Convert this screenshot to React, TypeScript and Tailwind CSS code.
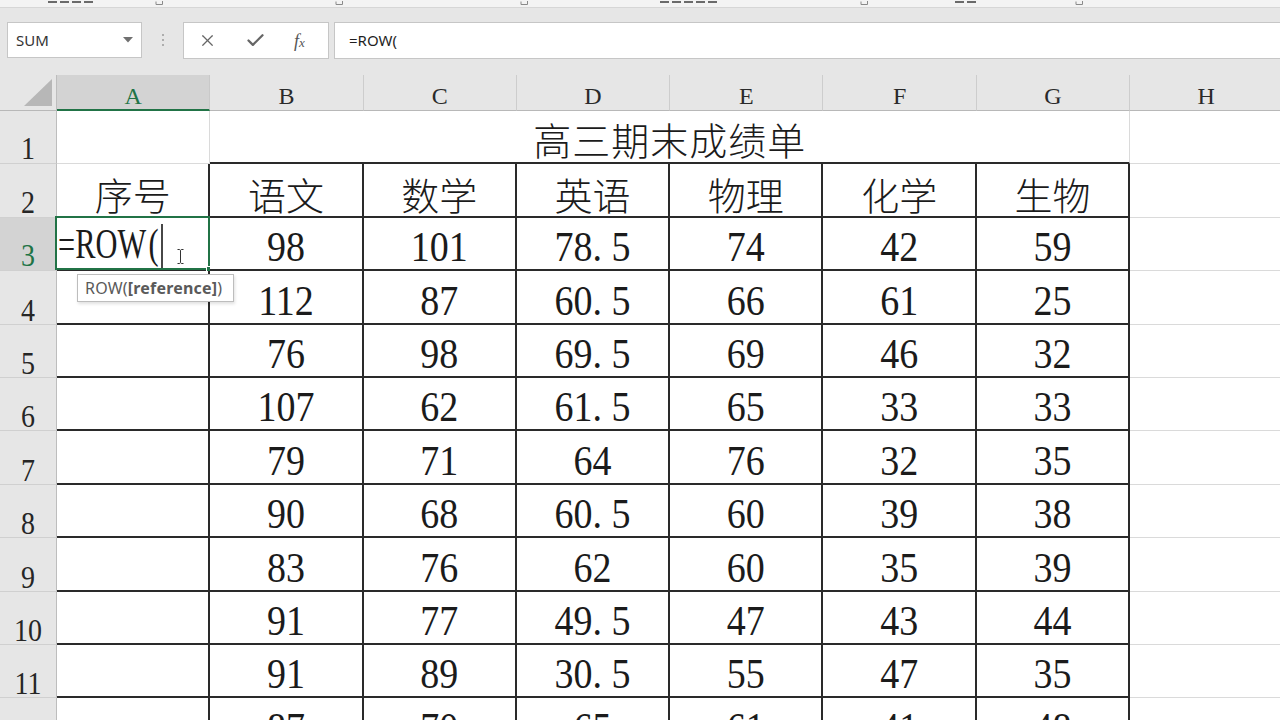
import { X, Check } from "lucide-react"

const COLS = ["A", "B", "C", "D", "E", "F", "G", "H"]

const SUBJECTS = ["语文", "数学", "英语", "物理", "化学", "生物"]

const SCORES: string[][] = [
  ["98", "101", "78.5", "74", "42", "59"],
  ["112", "87", "60.5", "66", "61", "25"],
  ["76", "98", "69.5", "69", "46", "32"],
  ["107", "62", "61.5", "65", "33", "33"],
  ["79", "71", "64", "76", "32", "35"],
  ["90", "68", "60.5", "60", "39", "38"],
  ["83", "76", "62", "60", "35", "39"],
  ["91", "77", "49.5", "47", "43", "44"],
  ["91", "89", "30.5", "55", "47", "35"],
  ["87", "70", "65", "61", "41", "48"],
]

const RIGHT = {
  dark: "border-r-2 border-r-[#2a2a2a]",
  light: "border-r border-r-[#dadada]",
}
const BOTTOM = {
  dark: "border-b-2 border-b-[#2a2a2a]",
  light: "border-b border-b-[#dadada]",
}

type Edge = "dark" | "light"

function Cell({
  right,
  bottom,
  className = "",
  children,
}: {
  right: Edge
  bottom: Edge
  className?: string
  children?: React.ReactNode
}) {
  return (
    <div className={`relative flex min-w-0 bg-white ${RIGHT[right]} ${BOTTOM[bottom]} ${className}`}>
      {children}
    </div>
  )
}

function Num({ v }: { v: string }) {
  const [a, b] = v.split(".")
  return (
    <span className="inline-block origin-bottom scale-y-[1.12] font-['Liberation_Serif',serif] text-[38px] leading-none text-[#1b1b1b]">
      {a}
      {b !== undefined && (
        <>
          <span className="inline-block w-[0.5em] text-left">.</span>
          {b}
        </>
      )}
    </span>
  )
}

function Zh({ children, className = "" }: { children: React.ReactNode; className?: string }) {
  return (
    <span className={`font-['Noto_Sans_CJK_SC',sans-serif] text-[38px] font-light leading-none text-[#1b1b1b] ${className}`}>
      {children}
    </span>
  )
}

function RowHead({ n, active = false }: { n: number; active?: boolean }) {
  return (
    <div
      className={`flex items-end justify-center border-r border-b border-r-[#bdbdbd] border-b-[#d0d0d0] ${
        active ? "bg-[#d3d3d3] text-[#217346]" : "bg-[#e6e6e6] text-[#262626]"
      }`}
    >
      <span className="-mb-[2px] inline-block origin-bottom scale-y-[1.1] font-['Liberation_Serif',serif] text-[28px] leading-none">
        {n}
      </span>
    </div>
  )
}

function Launcher() {
  return (
    <svg width="9" height="6" viewBox="0 0 9 6" className="block">
      <path d="M1 0.5v3h6.5V0" fill="none" stroke="#8a8a8a" strokeWidth="1" />
    </svg>
  )
}

// bottoms of the ribbon group labels, cut by the window edge
function LabelTail({ w }: { w: number }) {
  return (
    <div className="mb-[4px] flex gap-[3px]">
      {Array.from({ length: Math.round(w / 12) }).map((_, i) => (
        <span key={i} className="h-[2px] w-[9px] bg-[#6a6a6a]" />
      ))}
    </div>
  )
}

function RibbonStrip() {
  return (
    <div className="flex h-[8px] items-end overflow-hidden border-b border-b-[#d6d6d6] bg-[#f3f3f3]">
      <div className="w-[48px] shrink-0" />
      <div className="flex w-[107px] shrink-0 items-end">
        <LabelTail w={46} />
      </div>
      <div className="flex w-[180px] shrink-0 items-end">
        <Launcher />
      </div>
      <div className="flex w-[185px] shrink-0 items-end">
        <Launcher />
      </div>
      <div className="flex w-[140px] shrink-0 items-end">
        <Launcher />
      </div>
      <div className="flex w-[200px] shrink-0 items-end">
        <LabelTail w={60} />
      </div>
      <div className="flex w-[95px] shrink-0 items-end">
        <Launcher />
      </div>
      <div className="flex w-[120px] shrink-0 items-end">
        <LabelTail w={26} />
      </div>
      <div className="flex w-[100px] shrink-0 items-end">
        <Launcher />
      </div>
    </div>
  )
}

function FormulaBar() {
  return (
    <div className="flex h-[67px] items-start bg-[#e6e6e6] pt-[14px] font-['Noto_Sans',sans-serif]">
      <div className="ml-[7px] flex h-[36px] w-[135px] shrink-0 items-center justify-between border border-[#c6c6c6] bg-white pl-[8px] pr-[8px]">
        <span className="text-[15px] text-[#333]">SUM</span>
        <svg width="10" height="6" viewBox="0 0 10 6">
          <path d="M0 0h10L5 5.5z" fill="#707070" />
        </svg>
      </div>
      <div className="flex h-[36px] w-[41px] shrink-0 flex-col items-center justify-center gap-[3px]">
        <span className="h-[2px] w-[2px] rounded-full bg-[#9a9a9a]" />
        <span className="h-[2px] w-[2px] rounded-full bg-[#9a9a9a]" />
        <span className="h-[2px] w-[2px] rounded-full bg-[#9a9a9a]" />
      </div>
      <div className="flex h-[37px] w-[146px] shrink-0 items-center border border-[#c6c6c6] bg-white pl-[14px] pr-[12px]">
        <X size={19} strokeWidth={1.5} color="#666" />
        <Check size={21} strokeWidth={2.6} color="#666" className="ml-[28px]" />
        <span className="ml-[28px] font-['Liberation_Serif',serif] text-[18px] italic leading-none text-[#555]">
          f<span className="text-[13px]">x</span>
        </span>
      </div>
      <div className="-mr-[4px] ml-[5px] flex h-[37px] flex-1 items-center border border-[#c6c6c6] bg-white pl-[14px]">
        <span className="text-[15px] text-[#1f1f1f]">=ROW(</span>
      </div>
    </div>
  )
}

function IBeam() {
  return (
    <svg width="7" height="15" viewBox="0 0 7 15">
      <path d="M0.5 0.5h2.2l0.8 0.8 0.8-0.8h2.2M3.5 1.3v12.4M0.5 14.5h2.2l0.8-0.8 0.8 0.8h2.2" fill="none" stroke="#333" strokeWidth="1" />
    </svg>
  )
}

export default function App() {
  return (
    <div className="h-[720px] w-[1280px] overflow-hidden bg-white">
      <RibbonStrip />
      <FormulaBar />

      <div className="grid grid-cols-[57px_repeat(8,153.3px)] grid-rows-[36px_repeat(12,53.4px)]">
        {/* corner */}
        <div className="flex items-end justify-end border-r border-b border-r-[#bdbdbd] border-b-[#b8b8b8] bg-[#e6e6e6] pb-[4px] pr-[4px]">
          <svg width="28" height="27" viewBox="0 0 28 27">
            <path d="M28 0V27H0z" fill="#b7b7b7" />
          </svg>
        </div>
        {COLS.map((c) =>
          c === "A" ? (
            <div
              key={c}
              className="flex items-end justify-center border-r border-b-2 border-r-[#c9c9c9] border-b-[#217346] bg-[#d3d3d3] pb-[1px]"
            >
              <span className="font-['Liberation_Serif',serif] text-[24px] leading-none text-[#217346]">{c}</span>
            </div>
          ) : (
            <div
              key={c}
              className="flex items-end justify-center border-r border-b border-r-[#cdcdcd] border-b-[#b8b8b8] bg-[#e6e6e6] pb-[2px]"
            >
              <span className="font-['Liberation_Serif',serif] text-[24px] leading-none text-[#2a2a2a]">{c}</span>
            </div>
          )
        )}

        {/* row 1: title */}
        <RowHead n={1} />
        <Cell right="light" bottom="light" />
        <Cell right="light" bottom="dark" className="col-span-6 items-end justify-center pb-[4px]">
          <Zh className="tracking-[1px]">高三期末成绩单</Zh>
        </Cell>
        <Cell right="light" bottom="light" />

        {/* row 2: headers */}
        <RowHead n={2} />
        <Cell right="dark" bottom="dark" className="items-end justify-center pb-[3px]">
          <Zh>序号</Zh>
        </Cell>
        {SUBJECTS.map((s) => (
          <Cell key={s} right="dark" bottom="dark" className="items-end justify-center pb-[3px]">
            <Zh>{s}</Zh>
          </Cell>
        ))}
        <Cell right="light" bottom="light" />

        {/* data rows */}
        {SCORES.map((row, i) => {
          const n = i + 3
          return [
            <RowHead key={`h${n}`} n={n} active={n === 3} />,
            n === 3 ? (
              <Cell key={`a${n}`} right="dark" bottom="dark" className="items-end justify-start pb-[1px] pl-[1px]">
                <span className="inline-block origin-bottom-left scale-x-[0.8] scale-y-[1.1] whitespace-nowrap font-['Liberation_Serif',serif] text-[38px] leading-none text-[#1b1b1b]">
                  =ROW
                  <span className="ml-[3px]">(</span>
                  <span className="ml-[3px] inline-block h-[40px] w-[2px] bg-[#1b1b1b] align-[-9px]" />
                </span>
                <div className="pointer-events-none absolute -top-[2px] -left-[2px] -right-[2px] -bottom-[1px] border-2 border-[#217346]" />
                <div className="absolute -right-[5px] -bottom-[4px] h-[7px] w-[7px] border border-white bg-[#217346]" />
                <div className="absolute left-[120px] top-[31px]">
                  <IBeam />
                </div>
                <div className="absolute left-[20px] top-[56px] z-10 flex h-[28px] w-[157px] items-center border border-[#bdbdbd] bg-white pl-[7px] font-['Noto_Sans',sans-serif] text-[16px] tracking-[0.2px] text-[#5a5a5a] shadow-[1px_2px_3px_rgba(0,0,0,0.12)]">
                  ROW(<span className="font-bold">[reference]</span>)
                </div>
              </Cell>
            ) : (
              <Cell key={`a${n}`} right="dark" bottom="dark" />
            ),
            ...row.map((v, j) => (
              <Cell key={`c${n}-${j}`} right="dark" bottom="dark" className="items-end justify-center pb-[1px]">
                <Num v={v} />
              </Cell>
            )),
            <Cell key={`hh${n}`} right="light" bottom="light" />,
          ]
        })}
      </div>
    </div>
  )
}
